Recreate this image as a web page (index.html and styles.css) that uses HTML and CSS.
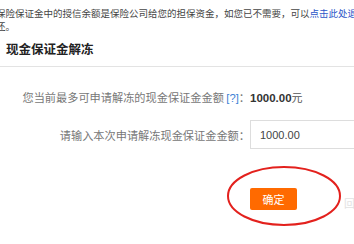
FILE: index.html
```html
<!DOCTYPE html>
<html lang="zh-CN">
<head>
  <meta charset="UTF-8">
  <meta name="viewport" content="width=device-width, initial-scale=1.0">
  <title>现金保证金解冻</title>
  <link rel="stylesheet" href="styles.css">
</head>
<body>

<p class="notice">保险保证金中的授信余额是保险公司给您的担保资金，如您已不需要，可以<a href="#">点击此处退</a>还。</p>

<div class="title-bar">
  <h2>现金保证金解冻</h2>
</div>

<div id="unfreeze-form">
  <div class="form-row info-row">
    <span class="label">您当前最多可申请解冻的现金保证金金额 <a class="help" href="#">[?]</a>：</span>
    <span class="value"><b>1000.00</b>元</span>
  </div>

  <div class="form-row input-row">
    <label class="label" for="amount">请输入本次申请解冻现金保证金金额：</label>
    <input type="text" id="amount" value="1000.00">
  </div>

  <div class="form-row btn-row">
    <span class="label"></span>
    <div class="btn-wrap">
      <button type="button">确定</button>
      <svg class="circle-mark" width="116" height="62" viewBox="0 0 116 62">
        <ellipse cx="58" cy="31" rx="56" ry="29" fill="none" stroke="#e3211d" stroke-width="2"/>
      </svg>
    </div>
  </div>
</div>

<span class="corner-mark">回</span>

</body>
</html>
```

FILE: styles.css
```css
body {
  margin: 0;
  overflow: hidden;
  background: #fff;
  font-family: "Liberation Sans", "Noto Sans CJK SC", sans-serif;
  color: #333;
  position: relative;
  height: 244px;
}

.notice {
  margin: 0 0 0 -4px;
  padding-top: 7px;
  width: 364px;
  font-size: 9.5px;
  line-height: 13px;
  color: #444;
}

.notice a {
  color: #2b55c8;
  text-decoration: none;
}

.title-bar {
  margin-top: 7px;
  padding: 0 0 6px 6px;
  border-bottom: 1px solid #e3e3e3;
}

.title-bar h2 {
  margin: 0;
  font-size: 12.5px;
  line-height: 20px;
  font-weight: bold;
  color: #222;
}

#unfreeze-form {
  padding-top: 22px;
  font-family: "Noto Sans CJK SC", sans-serif;
  font-size: 11px;
  color: #777;
}

.form-row {
  display: flex;
  align-items: center;
}

.form-row .label {
  width: 250px;
  flex: none;
  text-align: right;
  font-size: 11.2px;
}

.info-row {
  line-height: 16px;
}

.help {
  color: #3d7fd6;
  text-decoration: none;
  font-family: "Liberation Sans", sans-serif;
}

.value {
  color: #555;
}

.value b {
  color: #333;
  font-family: "Liberation Sans", sans-serif;
  font-size: 11.5px;
}

.input-row {
  margin-top: 14px;
}

.input-row input {
  width: 120px;
  height: 29px;
  box-sizing: border-box;
  padding: 0 9px;
  border: 1px solid #ddd;
  font-family: "Liberation Sans", sans-serif;
  font-size: 11px;
  color: #444;
  outline: none;
}

.btn-row {
  margin-top: 39px;
}

.btn-wrap {
  position: relative;
}

.btn-wrap button {
  display: block;
  width: 47px;
  height: 22px;
  padding: 0;
  border: none;
  border-radius: 2px;
  background-color: #ff6a00;
  color: #fff;
  font-family: "Noto Sans CJK SC", sans-serif;
  font-size: 11px;
  cursor: pointer;
}

.circle-mark {
  position: absolute;
  left: -24px;
  top: -23px;
}

.corner-mark {
  position: absolute;
  left: 344px;
  top: 195px;
  font-family: "Noto Sans CJK SC", sans-serif;
  font-size: 11px;
  color: #e2e2e2;
}
```
